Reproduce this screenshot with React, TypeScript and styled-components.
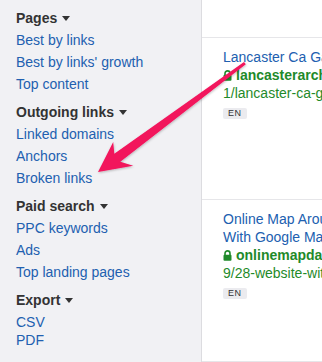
import * as React from "react";
import styled, { createGlobalStyle } from "styled-components";

const GlobalStyle = createGlobalStyle`
  html, body {
    margin: 0;
    padding: 0;
    background: #ffffff;
    overflow: hidden;
  }
  body {
    font-family: "Liberation Sans", Arial, sans-serif;
  }
`;

const Page = styled.div`
  position: relative;
  display: flex;
  width: 322px;
  height: 362px;
  overflow: hidden;
`;

const Sidebar = styled.nav`
  flex: 0 0 202px;
  box-sizing: border-box;
  padding: 7px 0 0 16px;
  background: #f1f1f4;
  border-right: 1px solid #dcdce0;
  display: flex;
  flex-direction: column;
  gap: 6px;
`;

const Section = styled.div`
  display: flex;
  flex-direction: column;
`;

const Heading = styled.div`
  display: flex;
  align-items: center;
  height: 22px;
  font-size: 14px;
  font-weight: bold;
  color: #333333;
`;

const Caret = styled.span`
  display: inline-block;
  margin: 1px 0 0 5px;
  width: 0;
  height: 0;
  border-left: 4px solid transparent;
  border-right: 4px solid transparent;
  border-top: 5px solid #333333;
`;

const LinkList = styled.div<{ $compact?: boolean }>`
  display: flex;
  flex-direction: column;
  padding-top: ${p => (p.$compact ? "2px" : "0")};
`;

const SideLink = styled.a<{ $compact?: boolean }>`
  font-size: 14px;
  line-height: ${p => (p.$compact ? "18px" : "22px")};
  color: #2160b0;
  text-decoration: none;
  white-space: nowrap;
`;

const Content = styled.main`
  flex: 0 0 auto;
  width: 300px;
  display: flex;
  flex-direction: column;
`;

const TopBar = styled.div`
  height: 38px;
  border-bottom: 1px solid #e6e6e9;
`;

const Result = styled.div`
  box-sizing: border-box;
  min-height: 162px;
  padding: 10px 0 0 21px;
  border-bottom: 1px solid #e6e6e9;
  font-size: 14px;
  line-height: 18px;
`;

const Title = styled.a`
  display: block;
  width: 190px;
  color: #2160b0;
  text-decoration: none;
`;

const Domain = styled.div`
  display: flex;
  align-items: center;
  gap: 4px;
  color: #1f8a2a;
  font-weight: bold;
  white-space: nowrap;
`;

const UrlPath = styled.div`
  color: #1f8a2a;
  white-space: nowrap;
`;

const Badge = styled.span`
  display: inline-block;
  margin-top: 4px;
  padding: 0 5px;
  height: 11px;
  line-height: 11px;
  font-size: 9px;
  letter-spacing: 0.5px;
  color: #333333;
  background: #ebebef;
  border-radius: 2px;
`;

const Overlay = styled.svg`
  position: absolute;
  left: 0;
  top: 0;
  pointer-events: none;
`;

const Lock = () => (
  <svg width="9" height="11" viewBox="0 0 9 11">
    <path d="M2 5V3.4a2.5 2.5 0 0 1 5 0V5" fill="none" stroke="#1f8a2a" strokeWidth="1.6" />
    <rect x="0.5" y="4.8" width="8" height="6" rx="1" fill="#1f8a2a" />
  </svg>
);

const sections = [
  { title: "Pages", links: ["Best by links", "Best by links' growth", "Top content"] },
  { title: "Outgoing links", links: ["Linked domains", "Anchors", "Broken links"] },
  { title: "Paid search", links: ["PPC keywords", "Ads", "Top landing pages"] },
  { title: "Export", links: ["CSV", "PDF"], compact: true },
];

const results = [
  {
    title: "Lancaster Ca Garage Door",
    domain: "lancasterarchitects.com/2018/0",
    path: "1/lancaster-ca-garage-door-repair",
  },
  {
    title: "Online Map Around Address With Google Maps Plugin",
    domain: "onlinemapdaddy.com/2019/0",
    path: "9/28-website-with-google-maps",
  },
];

export default function App() {
  return (
    <>
      <GlobalStyle />
      <Page>
        <Sidebar>
          {sections.map(s => (
            <Section key={s.title}>
              <Heading>
                {s.title}
                <Caret />
              </Heading>
              <LinkList $compact={s.compact}>
                {s.links.map(l => (
                  <SideLink key={l} href="#" $compact={s.compact}>
                    {l}
                  </SideLink>
                ))}
              </LinkList>
            </Section>
          ))}
        </Sidebar>
        <Content>
          <TopBar />
          {results.map(r => (
            <Result key={r.domain}>
              <Title href="#">{r.title}</Title>
              <Domain>
                <Lock />
                {r.domain}
              </Domain>
              <UrlPath>{r.path}</UrlPath>
              <Badge>EN</Badge>
            </Result>
          ))}
        </Content>
        <Overlay width="322" height="362" viewBox="0 0 322 362">
          <defs>
            <filter id="arrowShadow" x="-20%" y="-20%" width="140%" height="140%">
              <feDropShadow dx="0.5" dy="1" stdDeviation="1" floodColor="#000" floodOpacity="0.25" />
            </filter>
          </defs>
          <polygon
            points="98,172 133.2,165.8 120.3,161.7 245.8,64.3 244,61.9 114.3,153.7 113.2,142.1"
            fill="#f2145c"
            filter="url(#arrowShadow)"
          />
        </Overlay>
      </Page>
    </>
  );
}
